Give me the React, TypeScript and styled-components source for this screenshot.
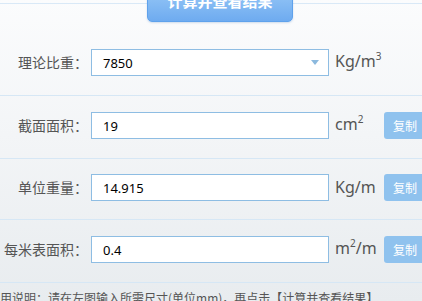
import React from "react";
import styled, { createGlobalStyle } from "styled-components";

const Global = createGlobalStyle`
  html, body { margin: 0; padding: 0; overflow: hidden; }
  body {
    width: 422px;
    height: 301px;
    background: linear-gradient(#fbfcfd 0%, #f3f5f7 45%, #e8ecef 100%);
    font-family: "Noto Sans CJK SC", "Noto Sans", sans-serif;
  }
`;

const Page = styled.div`
  width: 422px;
  height: 301px;
  padding-top: 3px;
  box-sizing: border-box;
  overflow: hidden;
`;

const Header = styled.div`
  height: 30px;
  border-top: 1px solid #d9e9f7;
  display: flex;
  justify-content: flex-start;
  padding-left: 147px;
  box-sizing: border-box;
`;

const CalcButton = styled.button`
  margin-top: -20px;
  width: 146px;
  height: 38px;
  border: 1px solid #5fa2ec;
  border-radius: 5px;
  background: linear-gradient(#9ccbf7, #6eabf0);
  box-shadow: 0 1px 2px rgba(80, 130, 190, 0.25);
  color: #fff;
  font-family: "Noto Sans CJK SC", sans-serif;
  font-size: 15px;
  font-weight: 700;
  line-height: 20px;
  padding: 0;
  display: flex;
  align-items: flex-start;
  justify-content: center;
  padding-top: 6px;
  box-sizing: border-box;
`;

const Row = styled.div`
  display: flex;
  align-items: center;
  padding: 15px 0 18px;
  border-bottom: 1px solid #d6e7f5;
`;

const Label = styled.div`
  width: 88px;
  margin-right: 3px;
  text-align: right;
  white-space: nowrap;
  font-size: 14px;
  color: #555;
  line-height: 27px;
  flex: none;
`;

const Field = styled.div`
  position: relative;
  width: 238px;
  height: 27px;
  border: 1px solid #8ebde3;
  background: #fff;
  box-sizing: border-box;
  flex: none;
  display: flex;
  align-items: center;
  padding-left: 11px;
  font-family: "Noto Sans", "Noto Sans CJK SC", sans-serif;
  font-size: 13px;
  color: #000;
`;

const Arrow = styled.span`
  position: absolute;
  right: 9px;
  top: 10px;
  width: 0;
  height: 0;
  border-left: 4.5px solid transparent;
  border-right: 4.5px solid transparent;
  border-top: 5px solid #8cb9de;
`;

const Unit = styled.div`
  width: 49px;
  margin-left: 6px;
  font-family: "Noto Sans", sans-serif;
  font-size: 16px;
  color: #555;
  white-space: nowrap;
  flex: none;
  line-height: 27px;

  sup {
    font-size: 10px;
    vertical-align: 0;
    position: relative;
    top: -7px;
  }
`;

const CopyButton = styled.button`
  flex: none;
  width: 44px;
  height: 27px;
  border: none;
  border-radius: 3px;
  background: #8fc2ee;
  color: #fff;
  font-family: "Noto Sans CJK SC", sans-serif;
  font-size: 12px;
  text-align: left;
  padding: 0 0 0 9px;
  line-height: 27px;
`;

const Footer = styled.div`
  margin-left: -12px;
  padding-top: 8px;
  font-size: 12px;
  line-height: 14px;
  color: #555;
  white-space: nowrap;
`;

type RowData = {
  label: string;
  value: string;
  unit: React.ReactNode;
  select?: boolean;
  copy?: boolean;
};

const rows: RowData[] = [
  { label: "理论比重：", value: "7850", unit: <>Kg/m<sup>3</sup></>, select: true },
  { label: "截面面积：", value: "19", unit: <>cm<sup>2</sup></>, copy: true },
  { label: "单位重量：", value: "14.915", unit: <>Kg/m</>, copy: true },
  { label: "每米表面积：", value: "0.4", unit: <>m<sup>2</sup>/m</>, copy: true },
];

export default function App() {
  return (
    <Page>
      <Global />
      <Header>
        <CalcButton>计算并查看结果</CalcButton>
      </Header>
      {rows.map((r) => (
        <Row key={r.label}>
          <Label>{r.label}</Label>
          <Field>
            {r.value}
            {r.select && <Arrow />}
          </Field>
          <Unit>{r.unit}</Unit>
          {r.copy && <CopyButton>复制</CopyButton>}
        </Row>
      ))}
      <Footer>使用说明：请在左图输入所需尺寸(单位mm)，再点击【计算并查看结果】</Footer>
    </Page>
  );
}
